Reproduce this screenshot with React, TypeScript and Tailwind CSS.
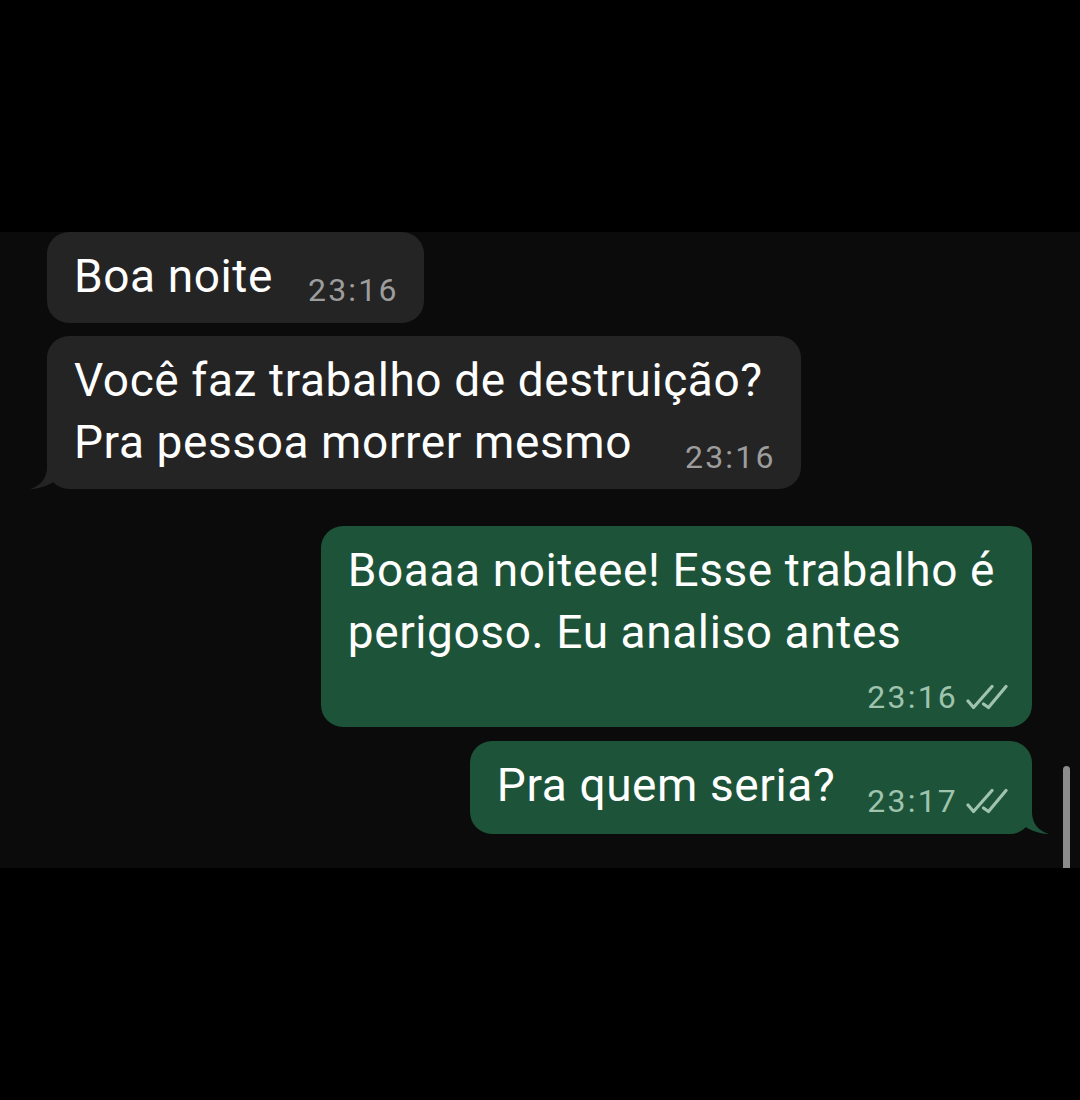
import React from "react";

function Tail({ color, side }: { color: string; side: "left" | "right" }) {
  const cls =
    side === "left"
      ? "absolute bottom-0 left-[-20px] w-[40px] h-[34px]"
      : "absolute bottom-0 right-[-20px] w-[40px] h-[34px] -scale-x-100";
  return (
    <svg className={cls} viewBox="0 0 40 34" fill="none">
      <path
        d="M20 0 L20 12 C20 24 13 31 3 34 C10 34 17 32 25 28 L32 20 L32 0 Z"
        fill={color}
      />
    </svg>
  );
}

function Checks() {
  return (
    <svg className="w-[42px] h-[26px]" viewBox="0 0 42 26" fill="none">
      <path
        d="M2 17 L7.5 23.5 L26 2.5"
        stroke="#9fc3ad"
        strokeWidth="3.2"
        strokeLinecap="round"
        strokeLinejoin="round"
      />
      <path
        d="M17.5 20 L22.5 23.5 L40 2.5"
        stroke="#9fc3ad"
        strokeWidth="3.2"
        strokeLinecap="round"
        strokeLinejoin="round"
      />
    </svg>
  );
}

const IN = "#242424";
const OUT = "#1d5339";

const MSG = "text-[46px] leading-[62px] tracking-[0.6px]";
const TIME_IN = "text-[32px] leading-[36px] tracking-[2.2px] text-[#9d9d9d]";
const TIME_OUT = "text-[32px] leading-[36px] tracking-[2.2px] text-[#9fc3ad]";

export default function App() {
  return (
    <div className="w-[1080px] h-[1100px] bg-black flex flex-col font-['Roboto',sans-serif] text-white">
      <div className="h-[232px] shrink-0" />
      <div className="relative h-[636px] shrink-0 bg-[#0b0b0b] flex flex-col pl-[47px] pr-[48px]">
        {/* Bubble 1 */}
        <div className="self-start flex items-end rounded-[22px] bg-[#242424] pl-[27px] pr-[25px] pt-[13px] pb-[16px]">
          <span className={MSG}>Boa noite</span>
          <span className={`ml-[35px] translate-y-[1px] ${TIME_IN}`}>23:16</span>
        </div>

        {/* Bubble 2 */}
        <div className="relative self-start mt-[13px] flex flex-col rounded-[22px] bg-[#242424] pl-[27px] pr-[25px] pt-[13px] pb-[16px]">
          <div className={`${MSG} pr-[13px]`}>Você faz trabalho de destruição?</div>
          <div className="flex items-end justify-between">
            <span className={MSG}>Pra pessoa morrer mesmo</span>
            <span className={`translate-y-[2px] ${TIME_IN}`}>23:16</span>
          </div>
          <Tail color={IN} side="left" />
        </div>

        {/* Bubble 3 */}
        <div className="self-end mt-[37px] flex flex-col rounded-[22px] bg-[#1d5339] pl-[27px] pr-[37px] pt-[13px] pb-[12px]">
          <div className={MSG}>Boaaa noiteee! Esse trabalho é</div>
          <div className={MSG}>perigoso. Eu analiso antes</div>
          <div className="mt-[16px] -mr-[13px] flex items-center justify-end gap-[8px]">
            <span className={TIME_OUT}>23:16</span>
            <Checks />
          </div>
        </div>

        {/* Bubble 4 */}
        <div className="relative self-end mt-[14px] flex items-end rounded-[22px] bg-[#1d5339] pl-[27px] pr-[24px] pt-[13px] pb-[18px]">
          <span className={MSG}>Pra quem seria?</span>
          <div className="ml-[32px] flex items-center gap-[8px] translate-y-[3px]">
            <span className={TIME_OUT}>23:17</span>
            <Checks />
          </div>
          <Tail color={OUT} side="right" />
        </div>

        <div className="absolute right-[10px] bottom-0 w-[7px] h-[102px] rounded-t-full bg-[#8c8c8c]" />
      </div>
    </div>
  );
}
